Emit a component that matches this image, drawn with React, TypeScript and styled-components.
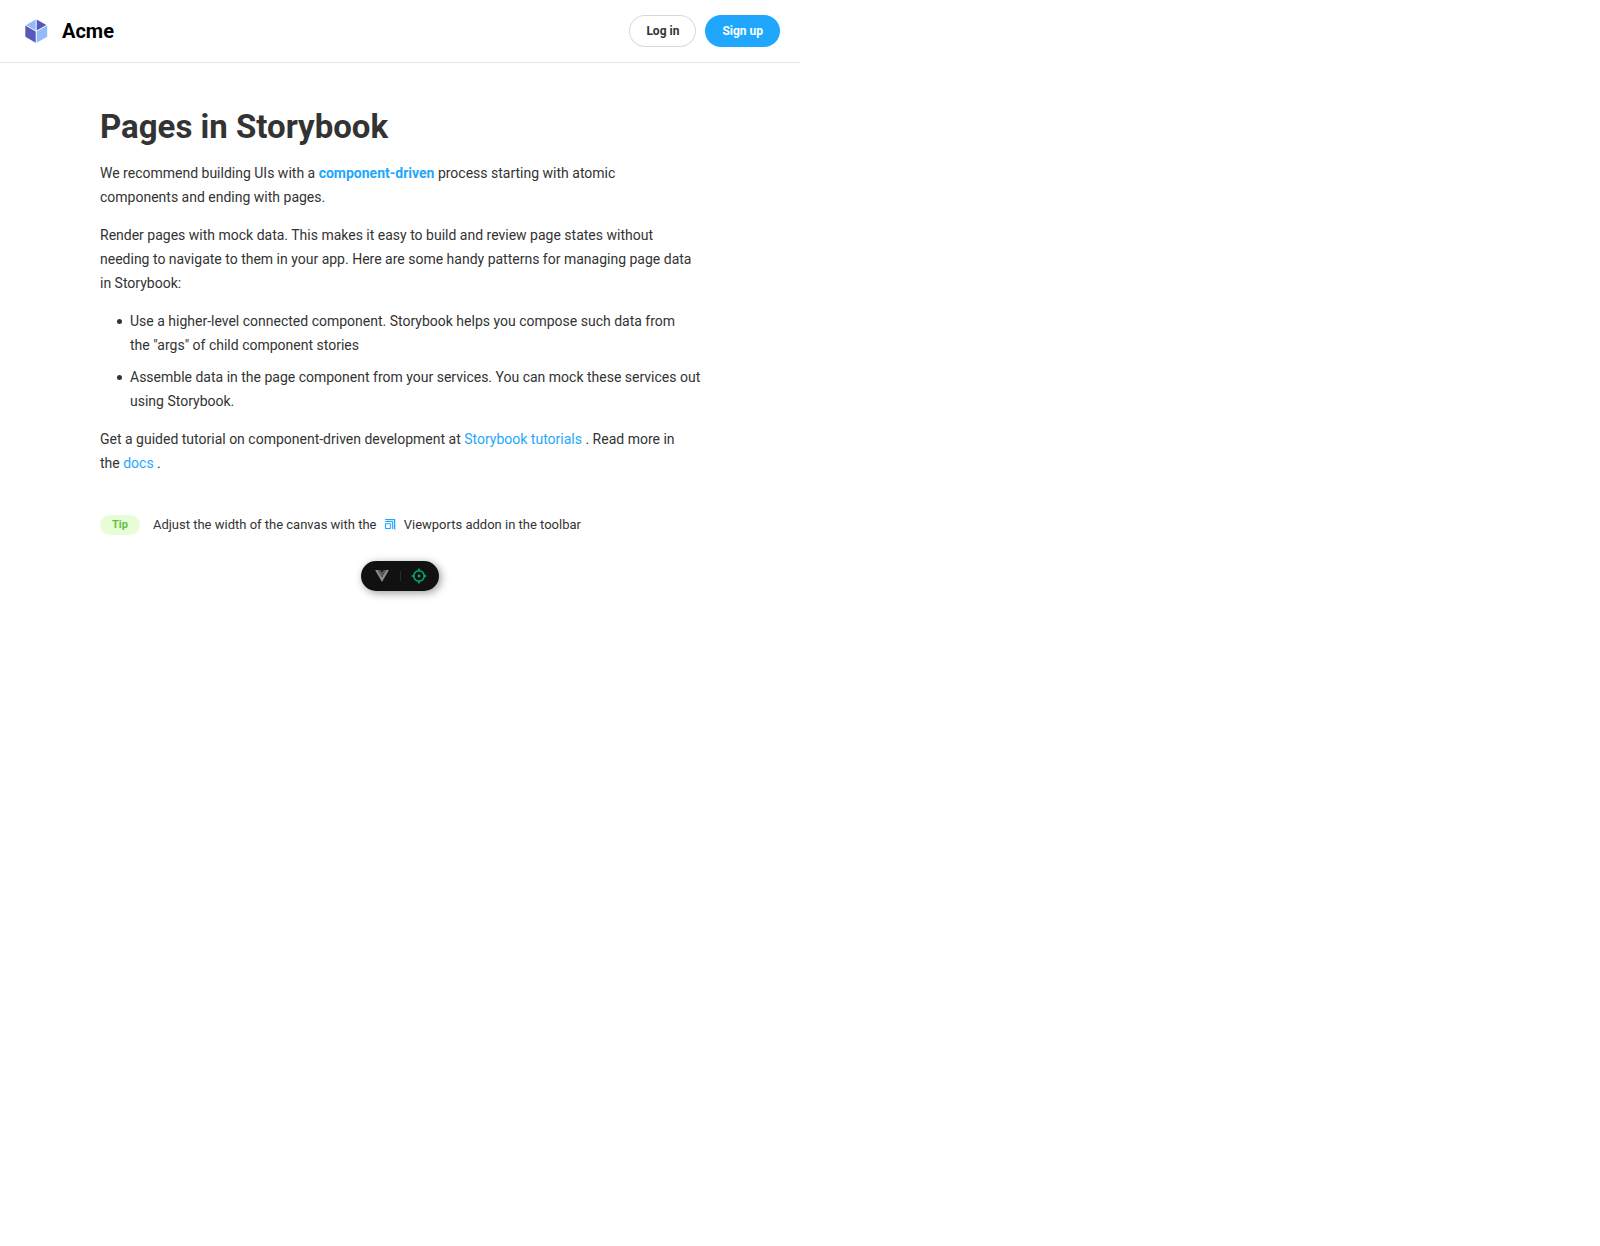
import React from "react";
import styled, { createGlobalStyle } from "styled-components";

const GlobalStyle = createGlobalStyle`
  body {
    margin: 0;
    background: #fff;
    font-family: Roboto, "Liberation Sans", sans-serif;
  }
`;

const Page = styled.div`
  display: flex;
  flex-direction: column;
  width: 50%;
  padding-bottom: 24px;
`;

const Header = styled.header`
  display: flex;
  align-items: center;
  justify-content: space-between;
  padding: 15px 20px;
  border-bottom: 1px solid rgba(0, 0, 0, 0.1);
`;

const Brand = styled.div`
  display: flex;
  align-items: center;
  gap: 10px;
`;

const BrandName = styled.h1`
  margin: 0;
  color: #000;
  font-size: 20px;
  font-weight: 700;
  line-height: 20px;
`;

const Actions = styled.div`
  display: flex;
  gap: 9px;
`;

const Button = styled.button<{ $primary?: boolean }>`
  border: 0;
  border-radius: 48px;
  padding: 10px 17px;
  background: ${(p) => (p.$primary ? "#1ea7fd" : "transparent")};
  box-shadow: ${(p) => (p.$primary ? "none" : "rgba(0, 0, 0, 0.15) 0 0 0 1px inset")};
  color: ${(p) => (p.$primary ? "#fff" : "#333")};
  font-family: inherit;
  font-size: 12px;
  font-weight: 700;
  line-height: 12px;
  cursor: pointer;
`;

const Article = styled.section`
  display: flex;
  flex-direction: column;
  box-sizing: border-box;
  width: 100%;
  max-width: 640px;
  margin: 0 auto;
  padding: 48px 20px 26px;
  gap: 14px;
  color: #333;
  font-size: 14px;
  line-height: 24px;
`;

const Title = styled.h2`
  margin: 0 0 4px;
  font-size: 33px;
  font-weight: 700;
  line-height: 32px;
`;

const Paragraph = styled.p`
  margin: 0;
`;

const Patterns = styled.ul`
  display: flex;
  flex-direction: column;
  gap: 8px;
  margin: 0;
  padding-left: 17px;
  list-style: none;
`;

const Pattern = styled.li`
  display: flex;
  gap: 8px;
  white-space: nowrap;

  &::before {
    content: "";
    flex: none;
    width: 5px;
    height: 5px;
    margin-top: 10px;
    border-radius: 50%;
    background: #333;
  }
`;

const Link = styled.a<{ $strong?: boolean }>`
  color: #1ea7fd;
  font-weight: ${(p) => (p.$strong ? 700 : 400)};
  text-decoration: none;
`;

const TipRow = styled.div`
  display: flex;
  align-items: center;
  gap: 13px;
  margin-top: 26px;
  font-size: 13px;
  line-height: 20px;
`;

const TipBadge = styled.span`
  padding: 4px 12px;
  border-radius: 16px;
  background: #e7fdd8;
  color: #66bf3c;
  font-size: 11px;
  font-weight: 700;
  line-height: 12px;
`;

const ViewportIcon = styled.svg`
  width: 12px;
  height: 12px;
  margin: 3px 4px 0 8px;
  vertical-align: top;
`;

const Devtools = styled.div`
  display: flex;
  align-items: center;
  justify-content: space-between;
  align-self: center;
  box-sizing: border-box;
  width: 78px;
  height: 30px;
  padding: 0 12px 0 14px;
  border-radius: 15px;
  background: #111;
  box-shadow: 2px 2px 8px rgba(0, 0, 0, 0.4);
`;

const IconButton = styled.button`
  display: flex;
  padding: 0;
  border: 0;
  background: none;
  cursor: pointer;
`;

const Divider = styled.span`
  width: 1px;
  height: 10px;
  background: #2b2b2b;
`;

function AcmeLogo() {
  return (
    <svg width="32" height="32" viewBox="0 0 32 32" aria-hidden="true">
      <path d="M5.3 10.6l10.4 6v11.1l-10.4-6v-11zm11.4-6.2l9.7 5.5-9.7 5.6V4.4z" fill="#555AB9" />
      <path d="M27.2 10.6v11.2l-10.5 6V16.5l10.5-6zM15.7 4.4v11L6 10l9.7-5.5z" fill="#91BAF8" />
    </svg>
  );
}

export default function App() {
  return (
    <>
      <GlobalStyle />
      <Page>
        <Header>
          <Brand>
            <AcmeLogo />
            <BrandName>Acme</BrandName>
          </Brand>
          <Actions>
            <Button type="button">Log in</Button>
            <Button type="button" $primary>Sign up</Button>
          </Actions>
        </Header>

        <Article>
          <Title>Pages in Storybook</Title>
          <Paragraph>
            We recommend building UIs with a{" "}
            <Link href="https://componentdriven.org" $strong>component-driven</Link>{" "}
            process starting with atomic
            <br />
            components and ending with pages.
          </Paragraph>
          <Paragraph>
            Render pages with mock data. This makes it easy to build and review page states without
            needing to navigate to them in your app. Here are some handy patterns for managing page
            data in Storybook:
          </Paragraph>
          <Patterns>
            <Pattern>
              <span>
                Use a higher-level connected component. Storybook helps you compose such data from
                <br />
                the "args" of child component stories
              </span>
            </Pattern>
            <Pattern>
              <span>
                Assemble data in the page component from your services. You can mock these services
                out
                <br />
                using Storybook.
              </span>
            </Pattern>
          </Patterns>
          <Paragraph>
            Get a guided tutorial on component-driven development at{" "}
            <Link href="https://storybook.js.org/tutorials/">Storybook tutorials</Link> . Read more
            in
            <br />
            the <Link href="https://storybook.js.org/docs">docs</Link> .
          </Paragraph>
          <TipRow>
            <TipBadge>Tip</TipBadge>
            <span>
              Adjust the width of the canvas with the
              <ViewportIcon viewBox="0 0 12 12" aria-hidden="true">
                <path d="M3 3.1h5.4c.3 0 .5.2.5.4V12H12V1H3z" fill="#1ea7fd" opacity="0.25" />
                <path
                  d="M1.5 5.2h4.8c.3 0 .5.2.5.4v5.1c-.1.2-.3.3-.4.3H1.4a.5.5 0 01-.5-.4V5.7c0-.3.2-.5.5-.5zm0-2.1h6.9c.3 0 .5.2.5.4v7a.5.5 0 01-1 0V4H1.5a.5.5 0 010-1zm0-2.1h9c.3 0 .5.2.5.4v9.1a.5.5 0 01-1 0V2H1.5a.5.5 0 010-1zm4.3 5.2H2V10h3.8V6.2z"
                  fill="#1ea7fd"
                />
              </ViewportIcon>{" "}
              Viewports addon in the toolbar
            </span>
          </TipRow>
        </Article>

        <Devtools>
          <IconButton type="button" aria-label="Toggle devtools">
            <svg width="14" height="12" viewBox="0 0 256 221">
              <path d="M0 0l128 220.8L256 0h-51.2L128 132.48 50.56 0H0z" fill="#8c8c8c" />
              <path d="M50.56 0L128 133.12 204.8 0h-47.36L128 51.2 97.92 0H50.56z" fill="#5c5c5c" />
            </svg>
          </IconButton>
          <Divider />
          <IconButton type="button" aria-label="Inspect component">
            <svg width="16" height="16" viewBox="0 0 16 16" fill="none" stroke="#00b36b" strokeWidth="1.5">
              <circle cx="8" cy="8" r="5.2" />
              <path d="M8 .6v2.6M8 12.8v2.6M.6 8h2.6M12.8 8h2.6" />
              <circle cx="8" cy="8" r="1.4" fill="#00b36b" stroke="none" />
            </svg>
          </IconButton>
        </Devtools>
      </Page>
    </>
  );
}
